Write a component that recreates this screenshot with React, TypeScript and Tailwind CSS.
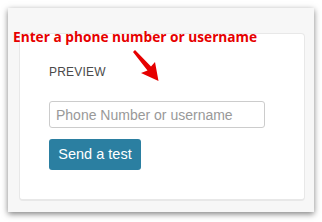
export default function App() {
  return (
    <div className="relative w-[322px] h-[222px] bg-white overflow-hidden">
      <div className="absolute left-[8px] top-[8px] w-[306px] h-[204px] bg-[#f7f7f7] shadow-[0_2px_6px_rgba(0,0,0,0.5)] pt-[25px] pl-[11px]">
        <div className="w-[286px] h-[168px] bg-white border border-[#e8e8e8] border-b-2 rounded-[4px] pl-[29px] pt-[30px] font-['Liberation_Sans',Arial,sans-serif]">
          <div className="text-[12px] leading-[16px] text-[#4a4a4a] tracking-[0.2px]">PREVIEW</div>
          <input
            className="mt-[21px] block w-[216px] h-[27px] border border-[#ccc] rounded-[3px] px-[6px] text-[14px] text-[#555] placeholder:text-[#999] outline-none"
            placeholder="Phone Number or username"
          />
          <button className="mt-[11px] block w-[92px] h-[31px] bg-[#2b7fa1] rounded-[3px] text-white text-[14.5px] leading-none">
            Send a test
          </button>
        </div>
      </div>
      <div className="absolute left-[13px] top-[28px] text-[13.7px] leading-[18px] font-bold text-[#e60000] font-['Open_Sans',sans-serif] whitespace-nowrap">
        Enter a phone number or username
      </div>
      <svg className="absolute left-0 top-0" width="322" height="222" viewBox="0 0 322 222">
        <polygon points="133,52 135,50 151,66.5 155,62 158.5,81 141,73 147.5,70.5" fill="#e60000" />
      </svg>
    </div>
  );
}
